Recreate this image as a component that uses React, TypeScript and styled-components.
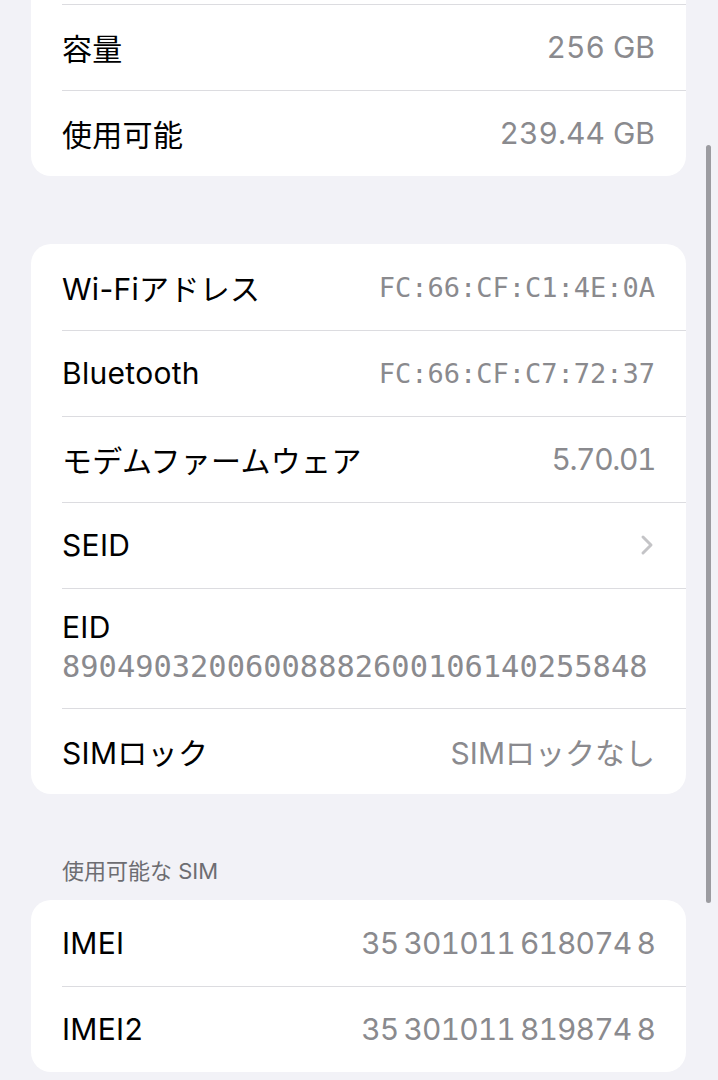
import { type FC } from "react";
import styled, { createGlobalStyle } from "styled-components";

const GlobalStyle = createGlobalStyle`
  html, body {
    margin: 0;
    padding: 0;
    background: #f2f2f7;
  }
  body {
    font-family: Inter, "Noto Sans CJK JP", sans-serif;
    -webkit-font-smoothing: antialiased;
  }
`;

const Page = styled.div`
  position: relative;
  width: 718px;
  height: 1080px;
  overflow: hidden;
  background: #f2f2f7;
  padding: 0 32px 0 31px;
  box-sizing: border-box;
`;

const Card = styled.div<{ $cut?: boolean; $gap?: number }>`
  background: #ffffff;
  border-radius: ${(p) => (p.$cut ? "0 0 20px 20px" : "20px")};
  padding-top: ${(p) => (p.$cut ? "4px" : "0")};
  margin-top: ${(p) => p.$gap ?? 0}px;
  overflow: hidden;
`;

const Row = styled.div<{ $divider?: boolean }>`
  position: relative;
  display: flex;
  align-items: center;
  justify-content: space-between;
  height: 86px;
  padding: 0 31px;
  box-sizing: border-box;

  &::before {
    content: "";
    display: ${(p) => (p.$divider ? "block" : "none")};
    position: absolute;
    top: 0;
    left: 31px;
    right: 0;
    height: 1px;
    background: #dcdce0;
  }
`;

const StackRow = styled(Row)`
  flex-direction: column;
  align-items: flex-start;
  justify-content: center;
  height: 120px;
  gap: 4px;
  padding-bottom: 4px;
`;

const Label = styled.span`
  font-size: 30px;
  color: #000000;
  letter-spacing: 0.3px;
  white-space: nowrap;
`;

const Value = styled.span<{ $mono?: boolean; $tracking?: number; $words?: number }>`
  font-family: ${(p) =>
    p.$mono
      ? `"DejaVu Sans Mono", "Liberation Mono", monospace`
      : `Inter, "Noto Sans CJK JP", sans-serif`};
  font-size: ${(p) => (p.$mono ? "27px" : "30px")};
  font-variant-numeric: tabular-nums;
  letter-spacing: ${(p) => p.$tracking ?? 0}px;
  word-spacing: ${(p) => p.$words ?? 0}px;
  color: #8a8a8e;
  white-space: nowrap;
`;

const LongValue = styled.span`
  font-family: "DejaVu Sans Mono", "Liberation Mono", monospace;
  font-size: 30.4px;
  color: #8a8a8e;
`;

const Chevron = styled.svg`
  width: 14px;
  height: 22px;
  margin-right: 1px;
`;

const SectionHeader = styled.div`
  margin-top: 60px;
  padding: 0 31px 12px;
  height: 34px;
  font-size: 22px;
  color: #6d6d72;
  line-height: 34px;
`;

const ScrollIndicator = styled.div`
  position: absolute;
  top: 145px;
  left: 706px;
  width: 5px;
  height: 758px;
  border-radius: 3px;
  background: #9c9ca1;
`;

type Item = {
  label: string;
  value?: string;
  mono?: boolean;
  chevron?: boolean;
  tracking?: number;
  words?: number;
};

const storage: Item[] = [
  { label: "容量", value: "256 GB" },
  { label: "使用可能", value: "239.44 GB" },
];

const network: Item[] = [
  { label: "Wi-Fiアドレス", value: "FC:66:CF:C1:4E:0A", mono: true },
  { label: "Bluetooth", value: "FC:66:CF:C7:72:37", mono: true },
  { label: "モデムファームウェア", value: "5.70.01", tracking: -1.4 },
  { label: "SEID", chevron: true },
];

const sims: Item[] = [
  { label: "IMEI", value: "35 301011 618074 8", tracking: -0.9, words: -2 },
  { label: "IMEI2", value: "35 301011 819874 8", tracking: -0.9, words: -2 },
];

const InfoRow: FC<{ item: Item; divider?: boolean }> = ({ item, divider }) => (
  <Row $divider={divider}>
    <Label>{item.label}</Label>
    {item.chevron ? (
      <Chevron viewBox="0 0 14 22">
        <path
          d="M3 3 L11 11 L3 19"
          fill="none"
          stroke="#c4c4c7"
          strokeWidth="3"
          strokeLinecap="round"
          strokeLinejoin="round"
        />
      </Chevron>
    ) : (
      <Value $mono={item.mono} $tracking={item.tracking} $words={item.words}>
        {item.value}
      </Value>
    )}
  </Row>
);

const App: FC = () => (
  <>
    <GlobalStyle />
    <Page>
      <Card $cut>
        {storage.map((item) => (
          <InfoRow key={item.label} item={item} divider />
        ))}
      </Card>

      <Card $gap={68}>
        {network.map((item, i) => (
          <InfoRow key={item.label} item={item} divider={i > 0} />
        ))}
        <StackRow $divider>
          <Label>EID</Label>
          <LongValue>89049032006008882600106140255848</LongValue>
        </StackRow>
        <InfoRow item={{ label: "SIMロック", value: "SIMロックなし" }} divider />
      </Card>

      <SectionHeader>使用可能な SIM</SectionHeader>
      <Card>
        {sims.map((item, i) => (
          <InfoRow key={item.label} item={item} divider={i > 0} />
        ))}
      </Card>
      <ScrollIndicator />
    </Page>
  </>
);

export default App;
